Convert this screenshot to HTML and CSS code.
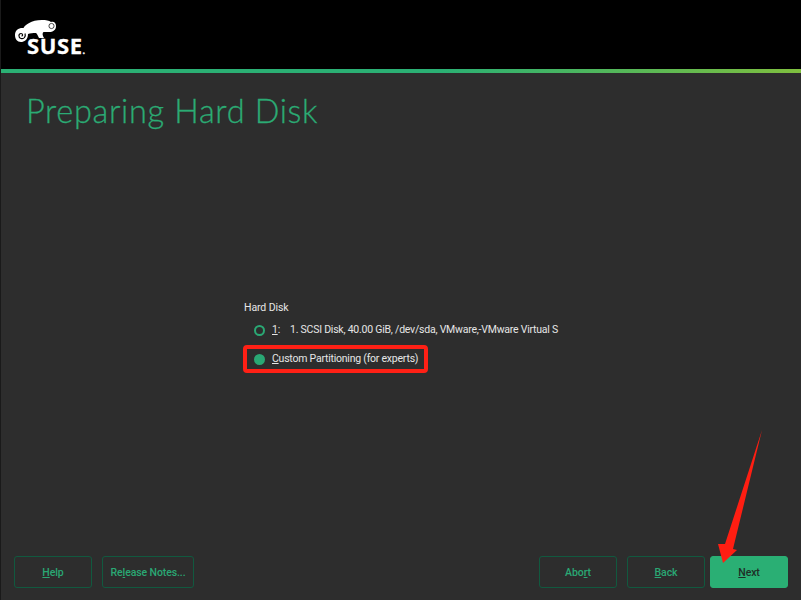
FILE: index.html
```html
<!DOCTYPE html>
<html lang="en">
<head>
<meta charset="utf-8">
<title>Preparing Hard Disk</title>
<link rel="stylesheet" href="styles.css">
</head>
<body>
<div class="app">
  <header class="banner">
    <div class="logo">
      <svg class="logo-mark" viewBox="15 19 44 26" width="44" height="26" aria-hidden="true">
        <path class="lizard" d="M15 35C15 30 19 27.5 23.5 28C25 25 31 20 42 20C46 20 49 20.5 51 22C54 21 56 23 56 26C56 30 53 32 49 32C46.5 32 45 32 43.5 32C42 33 42.5 36 44 38L39 38C38 36 37 33.5 36 33C33 33 30 33 28 34C28 40 24 42 21 42C17 42 15 39 15 35Z"/>
        <circle class="lizard-eye" cx="51.5" cy="26" r="2.6"/>
        <path class="lizard-curl" d="M21.5 36C23 36 23 33.5 21 33.5C18.5 33.5 18 37.5 21 38.5C24 39.5 26 36.5 25 33.5"/>
      </svg>
      <span class="logo-word">SUSE<span class="logo-dot">.</span></span>
    </div>
  </header>
  <div class="accent"></div>
  <h1 class="title">Preparing Hard Disk</h1>
  <main class="content">
    <div class="group">
      <div class="group-label">Hard Disk</div>
      <label class="option">
        <span class="radio"></span>
        <span class="option-text"><u>1</u>:<span class="option-detail">1. SCSI Disk, 40.00 GiB, /dev/sda, VMware,-VMware Virtual S</span></span>
      </label>
      <label class="option option-marked">
        <span class="radio radio-on"></span>
        <span class="option-text"><u>C</u>ustom Partitioning (for experts)</span>
      </label>
    </div>
  </main>
  <footer class="actions">
    <button class="btn btn-help"><u>H</u>elp</button>
    <button class="btn btn-notes">Re<u>l</u>ease Notes...</button>
    <span class="spacer"></span>
    <button class="btn">Abo<u>r</u>t</button>
    <button class="btn"><u>B</u>ack</button>
    <button class="btn btn-primary"><u>N</u>ext</button>
  </footer>
  <svg class="arrow" viewBox="0 0 801 600" width="801" height="600" aria-hidden="true">
    <polygon points="762,430 733,549 737,550 723,563 718,544 725,544"/>
  </svg>
</div>
</body>
</html>
```
FILE: styles.css
```css
* { box-sizing: border-box; }
html, body { margin: 0; height: 100%; }
body { background: #2d2d2d; font-family: Roboto, "Liberation Sans", sans-serif; }
.app {
  position: relative;
  width: 801px;
  height: 600px;
  display: flex;
  flex-direction: column;
  border-left: 1px solid #1a1a1a;
  overflow: hidden;
}
.banner {
  height: 69px;
  background: #000;
  margin-left: -1px;
  padding: 19px 0 0 15px;
}
.logo { position: relative; width: 72px; height: 36px; }
.logo-mark { display: block; }
.lizard { fill: #fff; }
.lizard-eye { fill: #fff; stroke: #000; stroke-width: .7; }
.lizard-curl { fill: none; stroke: #000; stroke-width: 1.2; }
.logo-word {
  position: absolute;
  left: 12px;
  top: 15px;
  color: #fff;
  font: 700 22px/22px "Open Sans", sans-serif;
  letter-spacing: .6px;
  -webkit-text-stroke: .3px #fff;
}
.logo-dot { font-size: 9px; letter-spacing: 0; }
.accent {
  height: 4px;
  background: linear-gradient(90deg, #2bb074 0%, #2bb074 55%, #7fbf3f 100%);
}
.title {
  margin: 18px 0 0 25px;
  color: #2bab74;
  font: 300 32.5px/40px Lato, "Open Sans", sans-serif;
  letter-spacing: .67px;
  -webkit-text-stroke: .3px #2bab74;
}
.content {
  flex: 1;
  padding: 170px 0 0 243px;
}
.group { color: #e6e6e6; font-size: 10.5px; line-height: 14px; letter-spacing: -.23px; }
.group-label { height: 14px; letter-spacing: -.1px; }
.option {
  display: flex;
  align-items: center;
  gap: 7px;
  height: 28px;
  padding-left: 10px;
  white-space: nowrap;
}
.option-detail { margin-left: 10px; }
.group-label + .option { height: 30px; }
.option-marked {
  width: 185px;
  margin-left: -1px;
  padding-left: 7px;
  border: 4px solid #ff2015;
  border-radius: 4px;
}
.radio {
  flex: none;
  width: 11px;
  height: 11px;
  border: 2px solid #2aa874;
  border-radius: 50%;
}
.radio-on { background: #2aa874; }
.actions {
  display: flex;
  gap: 10px;
  padding: 0 13px 12px 13px;
}
.spacer { flex: 1; }
.btn {
  width: 78px;
  height: 32px;
  padding: 1px 0 0;
  background: transparent;
  color: #2aa874;
  border: 1px solid #11593f;
  border-radius: 3px;
  font: 500 10.5px/28px Roboto, sans-serif;
  letter-spacing: -.1px;
}
.btn-notes { width: 92px; }
.btn-primary {
  margin-left: -5px;
  background: #2aaf74;
  border-color: #2aaf74;
  color: #1f2d27;
}
.arrow { position: absolute; left: -1px; top: 0; }
.arrow polygon { fill: #ff1e12; }
```
